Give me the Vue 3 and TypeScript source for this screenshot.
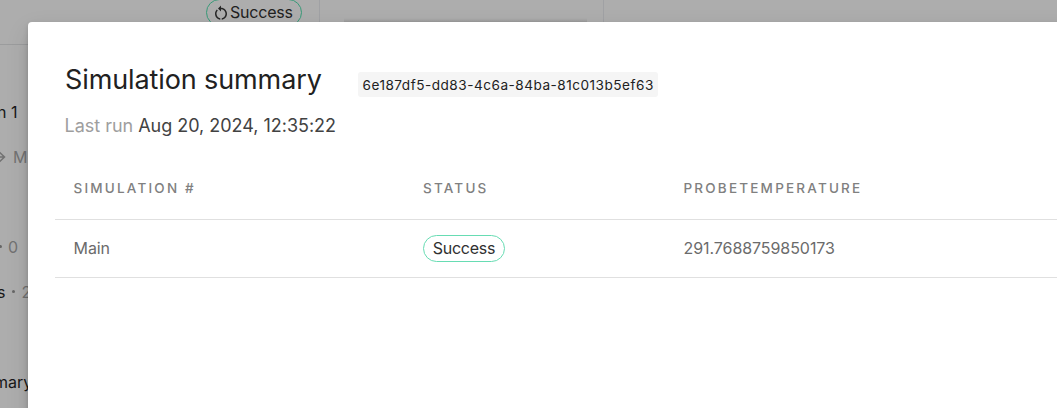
<script setup lang="ts">
interface Run {
  name: string
  status: string
  value: string
}

const runId = '6e187df5-dd83-4c6a-84ba-81c013b5ef63'
const lastRun = 'Aug 20, 2024, 12:35:22'
const columns: string[] = ['Simulation #', 'Status', 'probeTemperature']
const runs: Run[] = [{ name: 'Main', status: 'Success', value: '291.7688759850173' }]
</script>

<template>
  <div class="screen">
    <div class="page">
      <header class="bar">
        <div class="bar-status">
          <span class="run-pill">
            <svg class="restart" viewBox="0 0 24 24" aria-hidden="true">
              <path d="M12 5V2L8 6l4 4V7c3.31 0 6 2.69 6 6 0 2.97-2.17 5.43-5 5.91v2.02c3.95-.49 7-3.85 7-7.93 0-4.42-3.58-8-8-8zM6 13c0-1.65.67-3.15 1.76-4.24L6.34 7.34C4.9 8.79 4 10.79 4 13c0 4.08 3.05 7.44 7 7.93v-2.02c-2.83-.48-5-2.94-5-5.91z" />
            </svg>
            <span class="run-text">Success</span>
          </span>
        </div>
        <div class="bar-middle"><div class="card-edge"></div></div>
      </header>
      <ul class="outline">
        <li></li>
        <li class="strong one">n 1</li>
        <li class="muted link">
          <svg viewBox="0 0 13 12" aria-hidden="true"><path d="M0 6h11.5M6.5 1.2L11.5 6l-5 4.8" /></svg>
          <span>M</span>
        </li>
        <li></li>
        <li class="muted zero"><i class="dot"></i><span>0</span></li>
        <li class="count"><span class="strong">s</span><i class="dot"></i><span class="muted">2</span></li>
        <li></li>
        <li class="strong summary">mary</li>
      </ul>
    </div>

    <section class="modal">
      <div class="heading">
        <h1>Simulation summary</h1>
        <span class="run-id">{{ runId }}</span>
      </div>
      <p class="last-run"><span>Last run</span> {{ lastRun }}</p>
      <div class="table">
        <div class="row head">
          <span v-for="column in columns" :key="column">{{ column }}</span>
        </div>
        <div v-for="run in runs" :key="run.name" class="row body-row">
          <span>{{ run.name }}</span>
          <span><b class="pill">{{ run.status }}</b></span>
          <span>{{ run.value }}</span>
        </div>
      </div>
    </section>
  </div>
</template>

<style>
body {
  overflow: hidden;
}
</style>

<style scoped>
.screen {
  position: relative;
  width: 1057px;
  height: 408px;
  overflow: hidden;
  background: #adadad;
  font-family: Inter, sans-serif;
  color: #212121;
}
.screen,
.screen * {
  box-sizing: border-box;
}
.bar {
  display: flex;
  height: 45px;
  border-bottom: 1px solid #9b9c9d;
}
.bar-status {
  width: 320px;
  padding-left: 206px;
  border-right: 1px solid #a0a1a4;
}
.bar-middle {
  width: 284px;
  padding: 18px 16px 0 24px;
  border-right: 1px solid #a0a1a4;
}
.card-edge {
  height: 6px;
  background: linear-gradient(rgba(0, 0, 0, 0), rgba(0, 0, 0, 0.15));
}
.run-pill {
  display: flex;
  align-items: center;
  width: 96px;
  height: 27px;
  margin-top: -1px;
  padding-left: 5px;
  border: 1px solid #389a78;
  border-radius: 14px;
  font-size: 16px;
  letter-spacing: -0.2px;
  white-space: nowrap;
}
.run-text {
  padding-bottom: 2px;
}
.restart {
  width: 18px;
  height: 18px;
  flex: none;
  fill: #272727;
}
.outline {
  width: 60px;
  margin: -1px 0 0;
  padding: 0;
  list-style: none;
  font-size: 16px;
}
.outline li {
  display: flex;
  align-items: center;
  height: 45px;
  white-space: nowrap;
}
.strong {
  color: #171717;
}
.muted {
  color: #727272;
}
.one {
  margin-left: -3px;
}
.link svg {
  width: 13px;
  height: 12px;
  margin-left: -7px;
  margin-right: 7px;
  fill: none;
  stroke: #727272;
  stroke-width: 1.5;
}
.dot {
  width: 3px;
  height: 3px;
  border-radius: 50%;
  background: #666;
}
.zero .dot {
  margin: 0 6px 0 -1px;
}
.count .strong {
  margin-left: -3px;
}
.count .dot {
  margin: 0 6px 0 7px;
}
.summary {
  margin-left: -6px;
}
.modal {
  position: absolute;
  top: 22px;
  left: 28px;
  width: 1100px;
  height: 440px;
  padding: 39px 0 0 27px;
  border-radius: 4px;
  background: #fff;
  box-shadow: 0 11px 15px -7px rgba(0, 0, 0, 0.2), 0 9px 24px rgba(0, 0, 0, 0.1), 0 2px 5px rgba(0, 0, 0, 0.14);
}
.heading {
  display: flex;
  align-items: flex-start;
  height: 36px;
  padding-left: 10px;
}
h1 {
  width: 293px;
  margin: 0;
  font-size: 27px;
  font-weight: 400;
  line-height: 37px;
  letter-spacing: -0.11px;
  white-space: nowrap;
}
.run-id {
  width: 300px;
  height: 25px;
  margin-top: 11px;
  padding-left: 4.5px;
  border-radius: 3px;
  background: #f5f5f5;
  font-size: 13.6px;
  line-height: 26px;
  letter-spacing: 0.5px;
  white-space: nowrap;
}
.last-run {
  margin: 17px 0 0 9.5px;
  font-size: 18px;
  line-height: 24px;
  letter-spacing: -0.02px;
  color: #424242;
}
.last-run span {
  color: #9e9e9e;
}
.table {
  margin-top: 19px;
}
.row {
  display: grid;
  grid-template-columns: 349.5px 260.5px 1fr;
  align-items: center;
  height: 58px;
  padding-left: 18.5px;
  border-bottom: 1px solid #e0e0e0;
  font-size: 16px;
  color: #6b6b6b;
}
.body-row {
  padding-bottom: 2px;
  letter-spacing: -0.07px;
}
.head {
  height: 63px;
  font-size: 13.5px;
  font-weight: 500;
  letter-spacing: 2.2px;
  text-transform: uppercase;
  color: #808080;
}
.pill {
  display: inline-flex;
  align-items: center;
  justify-content: center;
  width: 82px;
  height: 27px;
  margin-top: 2px;
  padding-bottom: 2px;
  border: 1px solid #67dcb3;
  border-radius: 14px;
  font-weight: 400;
  letter-spacing: -0.25px;
  color: #303030;
}
</style>
